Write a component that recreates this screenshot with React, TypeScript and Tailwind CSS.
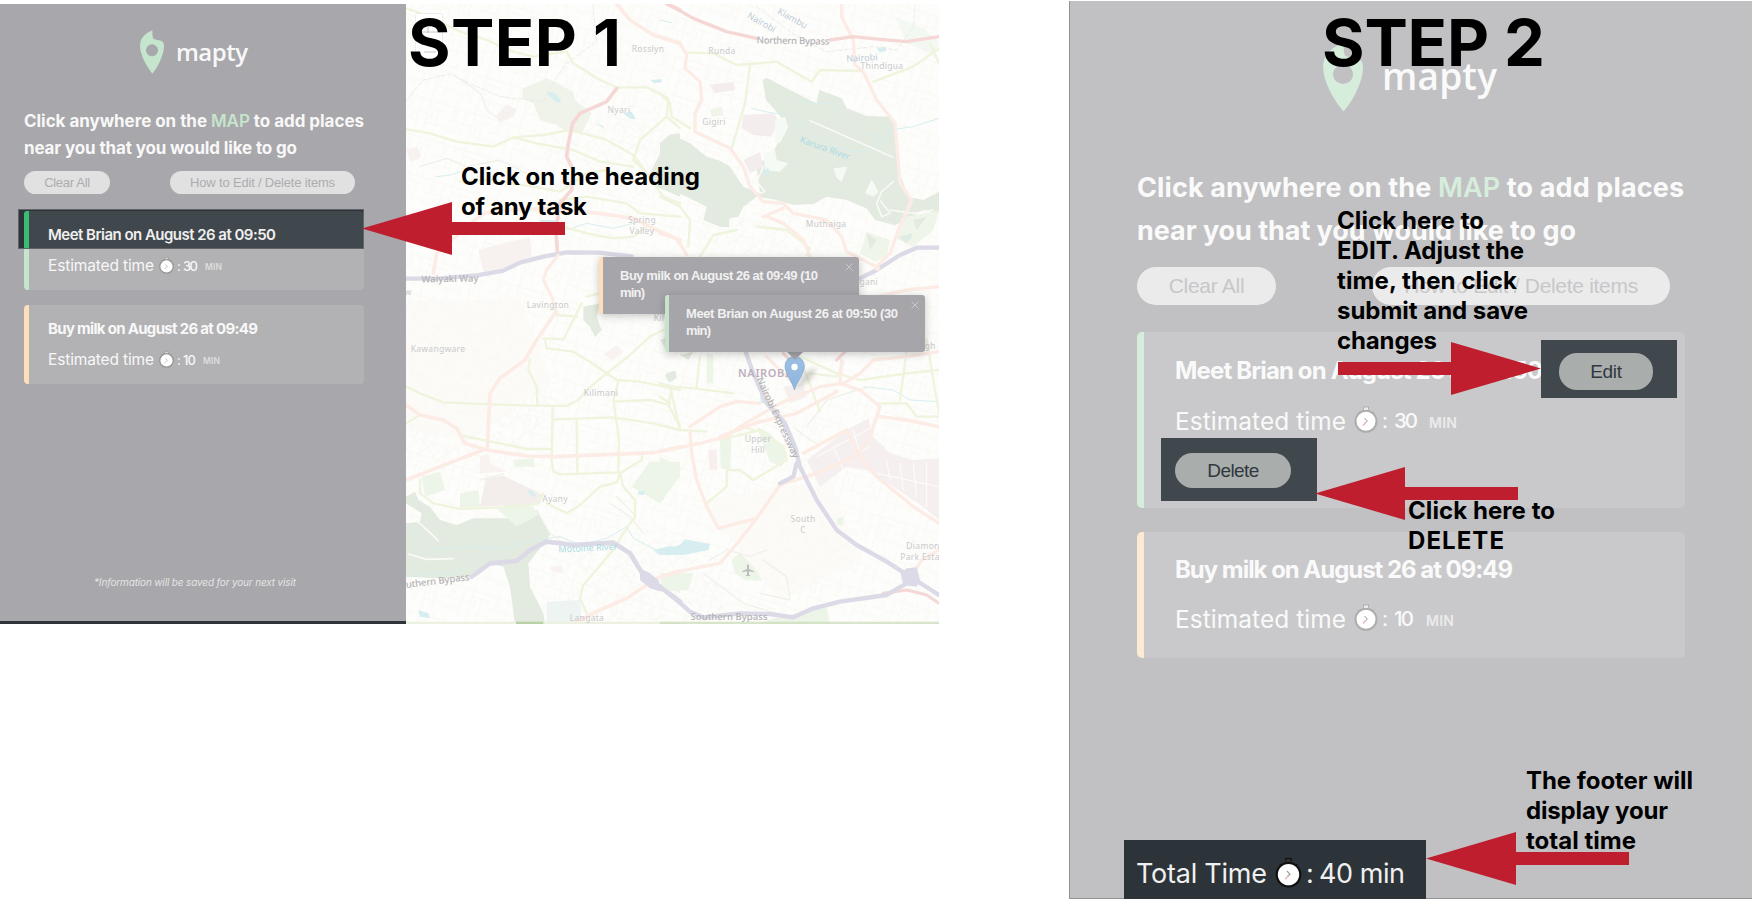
import React, { useLayoutEffect, useRef, useState } from "react";

/* Single line of text whose letter spacing is adjusted to fill a given width. */
function Fit({ w, className = "", children }: { w: number; className?: string; children: React.ReactNode }) {
  const ref = useRef<HTMLSpanElement>(null);
  const [spacing, setSpacing] = useState(0);
  useLayoutEffect(() => {
    const el = ref.current;
    if (!el) return;
    const count = (el.textContent || "").length;
    if (count > 1) setSpacing((w - el.getBoundingClientRect().width) / (count - 1));
  }, [w]);
  return (
    <span ref={ref} className={`inline-block whitespace-nowrap ${className}`} style={{ letterSpacing: spacing }}>
      {children}
    </span>
  );
}

function Pin({ className }: { className: string }) {
  return (
    <svg viewBox="0 0 72 132" preserveAspectRatio="none" className={className}>
      <path
        fillRule="evenodd"
        fill="currentColor"
        d="M37 1 C37 14 38 23 40 26 C48 30 64 30 70 37 C75 52 70 70 62 89 C55 106 46 120 37 131 C28 119 17 103 10 87 C3 70 -2 53 1 38 C5 18 21 9 37 1 Z M36 43 a18 18 0 1 0 0.1 0 Z"
      />
    </svg>
  );
}

function Stopwatch({ className, rim, crown }: { className: string; rim: string; crown: string }) {
  return (
    <svg viewBox="0 0 24 28" className={className}>
      <path d="M9 1.500h6v3H9z" fill={rim} />
      <path d="M10 2.500h4v4h-4z" fill={crown} />
      <path d="M4.200 7l2 2M19.800 7l-2 2" stroke={rim} strokeWidth="1.300" />
      <circle cx="12" cy="16.300" r="10.500" fill="#fff" stroke={rim} strokeWidth="2" />
      <path d="M10.500 13l2.800 3-2 2" fill="none" stroke="#9a9a9a" strokeWidth="1" />
      <path d="M12 17l-3 3.500" stroke="#eeb0b0" strokeWidth="1.200" />
    </svg>
  );
}

function Arrow({ className, flip = false }: { className: string; flip?: boolean }) {
  return (
    <svg viewBox="0 0 203 53" className={className}>
      <path
        fill="#be1e2d"
        d={flip ? "M203 26.500 113 0V20H0V33H113V53Z" : "M0 26.500 90 0V20H203V33H90V53Z"}
      />
    </svg>
  );
}

function SmallEstimate({ value, valueClass }: { value: string; valueClass: string }) {
  return (
    <div className="relative mt-[7px] flex h-6 leading-6 text-[#f7f7f7]">
      <div className="w-[110px] text-[15.500px]">
        <Fit w={106}>Estimated time</Fit>
      </div>
      <Stopwatch className="mt-[2px] h-[18px] w-[17px]" rim="#949494" crown="#dcdcdc" />
      <div className="ml-px w-[7px] pl-px text-[13px]">:</div>
      <div className={`text-[13px] font-medium ${valueClass}`}>
        <Fit w={value === "30" ? 15 : 13}>{value}</Fit>
      </div>
      <div className="pt-px text-[8.500px] font-semibold text-[#dedede]">
        <Fit w={17}>MIN</Fit>
      </div>
    </div>
  );
}

function LargeEstimate({ value, valueClass }: { value: string; valueClass: string }) {
  return (
    <div className="flex h-9 leading-9 text-[#f9f9f9]">
      <div className="w-[178px] text-[24.500px]">
        <Fit w={171}>Estimated time</Fit>
      </div>
      <Stopwatch className="mt-[2px] h-[28px] w-[26px]" rim="#adadad" crown="#f0f0f0" />
      <div className="ml-[2px] w-[13px] pl-px text-[21px]">:</div>
      <div className={`text-[20.500px] font-medium ${valueClass}`}>
        <Fit w={value === "30" ? 24 : 20}>{value}</Fit>
      </div>
      <div className="pt-[2px] text-[14px] font-semibold text-[#ebebeb]">
        <Fit w={28}>MIN</Fit>
      </div>
    </div>
  );
}

function StepOnePanel() {
  return (
    <div className="flex w-[406px] shrink-0 flex-col border-b-[3px] border-[#2d3439] bg-[#a8a7ab] font-['Inter',sans-serif] text-[#f8f8f8]">
      <div className="ml-[140px] mt-[26px] flex h-11">
        <Pin className="h-11 w-6 text-[#c5e5cd]" />
        <div className="ml-3 font-['Open_Sans',sans-serif] text-[24px] font-semibold leading-[44px]">
          <Fit w={72}>mapty</Fit>
        </div>
      </div>
      <div className="ml-6 mr-[42px] mt-[34px] text-[17px] font-bold leading-[27px]">
        <div className="h-[27px]">
          <Fit w={340}>
            Click anywhere on the <span className="font-semibold text-[#c5e5cd]">MAP</span> to add places
          </Fit>
        </div>
        <div className="h-[27px]">
          <Fit w={273}>near you that you would like to go</Fit>
        </div>
      </div>
      <div className="ml-6 mr-[51px] mt-[9px] flex justify-between font-['Liberation_Sans',sans-serif] text-[13px] leading-[23px] text-[#aeacb0]">
        <button className="h-[23px] w-[86px] rounded-full bg-[#e1e1e1]">
          <Fit w={46}>Clear All</Fit>
        </button>
        <button className="h-[23px] w-[185px] rounded-full bg-[#e1e1e1]">
          <Fit w={145}>How to Edit / Delete items</Fit>
        </button>
      </div>
      <div className="ml-6 mr-[42px] mt-[17px] flex flex-col gap-[15px]">
        <div className="relative h-[79px] rounded-[4px] border-l-[5px] border-[#c5e5cd] bg-[#b2b2b4] pl-[19px] pt-3">
          <div className="absolute -left-[11.500px] -top-[2px] right-0 h-10 border border-[#60656a] bg-[#2d3439] pl-[5.500px] pt-px">
            <div className="h-full rounded-t-[3px] border-l-[5px] border-[#3cbc70] bg-[#41484d]" />
          </div>
          <div className="relative h-6 text-[15px] font-semibold leading-6 text-[#efefef]">
            <Fit w={228}>Meet Brian on August 26 at 09:50</Fit>
          </div>
          <SmallEstimate value="30" valueClass="w-[22px]" />
        </div>
        <div className="h-[79px] rounded-[4px] border-l-[5px] border-[#fedfba] bg-[#b2b2b4] pl-[19px] pt-3">
          <div className="h-6 text-[15px] font-bold leading-6">
            <Fit w={210}>Buy milk on August 26 at 09:49</Fit>
          </div>
          <SmallEstimate value="10" valueClass="w-[20px]" />
        </div>
      </div>
      <div className="mb-[31px] ml-[94px] mt-auto h-4 text-[10px] italic leading-4 text-[#e4e4e4]">
        <Fit w={202}>*Information will be saved for your next visit</Fit>
      </div>
    </div>
  );
}

function Popup({ lines, accent, width }: { lines: [string, string]; accent: string; width: number }) {
  return (
    <div
      className={`relative h-[57px] w-[260px] rounded-[3px] border-l-[4px] bg-[#a6a5aa] pl-[17px] pt-[10px] font-['Liberation_Sans',sans-serif] text-[13px] font-bold leading-[17px] text-[#f1f1f1] shadow-[0_2px_8px_rgba(0,0,0,0.22)] ${accent}`}
    >
      <div>
        <Fit w={width}>{lines[0]}</Fit>
      </div>
      <div>
        <Fit w={25}>{lines[1]}</Fit>
      </div>
      <svg viewBox="0 0 8 8" className="absolute right-[6px] top-[6px] size-2">
        <path d="M.5.500l7 7M7.500.500l-7 7" stroke="#cbcbce" strokeWidth="1" />
      </svg>
    </div>
  );
}

const YELLOW = "#eff4dd";
const ORANGE = "#fcece5";
const RED = "#f5d8d6";
const PURPLE = "#dbdae6";
const FOREST = "#e3eadf";
const WATER = "#d6eef0";

function MapArt() {
  return (
    <svg viewBox="406 4 533 620" className="block h-full w-full" fill="none" strokeLinejoin="round" strokeLinecap="round">
      <defs>
        <pattern id="streets" width="46" height="38" patternUnits="userSpaceOnUse" patternTransform="rotate(17)">
          <path d="M0 8H46M0 21H28M28 14H46M7 0V21M19 8V38M28 0V38M38 14V38M0 30H19M28 30H46" stroke="#f8f7f3" strokeWidth="0.900" />
          <path d="M10 11v7M14 24v4M32 18v8M42 3v5M3 33h8" stroke="#f4f3ee" strokeWidth="0.700" />
        </pattern>
        <pattern id="lanes" width="31" height="27" patternUnits="userSpaceOnUse" patternTransform="rotate(-34)">
          <path d="M0 5H31M0 16H18M11 5V27M24 0V16M18 16V27" stroke="#f7f6f2" strokeWidth="0.800" />
        </pattern>
      </defs>
      <rect x="406" y="4" width="533" height="620" fill="#fdfdfb" />
      <rect x="406" y="4" width="533" height="620" fill="url(#streets)" />
      <path d="M406 300H520L560 420 480 470 406 460ZM560 540H690L740 624H570ZM700 500 830 480 860 560 780 600ZM560 90 660 120 650 200 540 190ZM700 210 800 230 830 260H690Z" fill="url(#lanes)" />
      <path d="M406 300H520L550 380 470 440 406 430ZM700 500 830 480 860 560 780 600Z" fill="#fcfaf6" opacity=".5" />

      {/* north west */}
      <g transform="translate(400 0) scale(.33333)">
        <path fill="#f0f3ea" d="M370 265 440 235 520 275 525 300 575 340 545 400 500 395 470 375 420 360 400 310 365 295Z" />
        <path fill="#f7f2f0" d="M290 345 320 312 350 330 340 350 300 368ZM235 750 390 710 395 770 330 800 250 815ZM20 450 50 440 65 470 30 485Z" />
        <path fill={FOREST} d="M840 400 808 405 750 520 770 560 840 590Z" />
        <path fill={WATER} d="M440 275 465 278 485 305 470 308 450 290ZM752 240 785 237 785 247 760 249ZM670 340 695 335 708 358 690 356ZM587 366 612 380 608 384ZM420 660 470 660 468 667 422 667Z" />
        <path stroke="#e6e4e6" strokeWidth="2" strokeDasharray="12 7" d="M20 300 70 240 150 222 210 250 300 290 430 305 455 255 500 190 590 125 578 12" />
        <path stroke="#f2f0ea" strokeWidth="4" d="M160 225 200 250 245 285 260 330 300 360 340 330M60 500 140 475 200 500 300 480 380 520" />
        <path stroke={WATER} strokeWidth="3" d="M110 530 150 525 180 515M500 690 560 670 640 685 700 670" />
        <path stroke={YELLOW} strokeWidth="7" d="M20 25 90 50 180 95 260 120 340 155 400 170 500 155 520 190 600 240 650 262 740 262 805 295 800 350 840 385M800 350 720 420 700 480 740 520 790 590 840 610M20 388 90 400 170 425 280 440 340 412 430 405 510 390 620 420 700 465 740 520M340 412 410 430 520 450 600 485 700 500M180 545 270 540 400 560 480 575 560 520 620 510 720 550M480 600 560 590 680 610 720 640 840 650" />
        <path stroke={ORANGE} strokeWidth="11" d="M650 12 690 60 760 105 840 130M100 820 110 760 200 680 250 640 330 630 450 625 600 640 700 655 770 690 840 720" />
        <path stroke={RED} strokeWidth="11" d="M650 265 620 305 540 340 518 370 505 430 500 470 520 510 515 570 480 610 468 690 472 755M800 12 840 30" />
        <path stroke={YELLOW} strokeWidth="7" d="M490 680 560 700 640 715 700 710 740 680M560 890 600 880" />
        <path stroke={PURPLE} strokeWidth="13" strokeLinecap="butt" d="M18 836H110L230 826 310 812 360 788 430 770 500 757 600 758 700 770" />
        <path stroke={ORANGE} strokeWidth="9" d="M475 765 440 810 430 840 455 890 470 940" />
      </g>

      {/* north east */}
      <g transform="translate(660 0) scale(.33333)">
        <path fill={FOREST} d="M308 240 320 233 390 270 425 288 470 310 478 270 545 295 560 325 620 348 690 350 705 380 712 500 745 590 790 600 837 575V640L790 630 740 660 705 675 645 660 620 625 560 600 500 590 460 612 400 615 340 598 290 590 250 620 235 650 208 655 207 682 180 680 130 660 140 620 80 590 0 555V430L30 403 90 430 140 470 180 482 210 500 250 560 300 580 290 500 340 455 380 375 350 335 318 300Z" />
        <path fill="#f3eeed" d="M250 345 340 340 355 360 335 410 280 405 245 385ZM250 480 300 455 310 500 270 520ZM150 255 220 245 225 270 165 280Z" />
        <path fill="#f6faf4" d="M310 460 345 450 350 480 385 490 360 515 315 510ZM345 360 375 350 385 380 360 430 345 425ZM520 505 562 500 545 545 530 535ZM615 580 635 538 655 575 640 590Z" />
        <path fill="#eff5e8" d="M150 330 185 320 190 345 155 350ZM620 695 690 720 680 770 645 785 600 760ZM740 650 837 632 820 690 760 740 705 715Z" />
        <path fill="#f4f8f2" d="M705 50 790 85 837 130 820 165 740 130Z" />
        <path fill={FOREST} d="M620 700 650 720 630 750ZM760 660 800 650 770 690ZM715 710 760 700 740 730Z" />
        <path fill={WATER} d="M650 145 675 140 680 152 660 157ZM315 510 325 500 328 525 316 525ZM735 705 755 710 750 720Z" />
        <path stroke={WATER} strokeWidth="3" d="M275 325 330 338 390 345 440 395 520 440 590 455 640 450 690 390 760 380 837 355M400 300 470 310 520 310 540 345 580 380 620 400 680 420M0 60 35 68" />
        <path stroke="#fafaf6" strokeWidth="5" d="M450 362 700 472M300 580 315 575 290 545 310 500M700 545 665 575 650 610 665 650 690 640 660 600M690 630 760 640 820 630" strokeDasharray="12 5" />
        <path stroke="#e6e4e6" strokeWidth="2" strokeDasharray="12 7" d="M290 20 390 95 450 130 500 155 640 140 710 150 760 80 765 12" />
        <path stroke={YELLOW} strokeWidth="7" d="M85 158 160 160 230 195 350 185 455 245 480 210 600 213M270 195 255 310 215 445M640 245 760 200 837 145M810 130 837 190M0 280 30 310 35 350 90 385M120 770 160 705 230 690M290 680 380 690 450 745 440 765M0 590 60 620 90 660 85 740" />
        <path stroke={ORANGE} strokeWidth="10" d="M0 110 60 130 80 165 75 205 120 245 125 300 105 340 105 395 210 445 250 500 270 560 310 605 370 610 400 640 500 660 545 710 560 755 650 800 690 760 715 690 755 600 720 550 705 370 650 300 610 215 585 195 580 120 545 50V12M310 650 370 625M320 650 370 670 430 720 450 770M0 700 50 715 80 765M837 860 740 870 650 890" />
        <path stroke={RED} strokeWidth="10" d="M25 12 100 55 200 95 290 115M510 120 580 110 660 118 740 125 837 110" />
        <path stroke={PURPLE} strokeWidth="13" d="M837 743H770L720 765 650 810 590 840" />
        <circle cx="652" cy="805" r="8" fill={ORANGE} />
      </g>

      {/* south west */}
      <g transform="translate(400 300) scale(.33333)">
        <path fill={FOREST} d="M18 590 45 575 55 600 90 620 120 660 170 675 220 655 340 655 410 630 450 705 400 770 385 790 390 860 430 940 435 972H345L330 860 310 800 270 790 220 830 120 835 18 830V670L60 665 65 640 18 610ZM550 20 600 10 590 50 605 90 585 112 570 80 550 60ZM795 225 825 212 830 235 805 245Z" />
        <path fill="#edf4e8" d="M65 530 120 515 135 570 75 590ZM180 580 235 570 240 620 180 625ZM290 625 340 610 400 620 415 645 350 680ZM340 480 400 475 405 500 345 500ZM695 560 750 485 840 485 840 530 780 610ZM780 830 840 820V880L790 860Z" />
        <path fill="#f3edec" d="M258 535 310 527 430 585 420 612 240 620Z" />
        <path fill="#f8f3f1" d="M610 165 650 135 670 155 640 180ZM240 470 265 460 270 490 320 515 240 520ZM450 800 485 795 490 820 455 815Z" />
        <path fill="#edf4f2" d="M440 905 540 900 545 972H440Z" />
        <path fill={WATER} d="M380 570 395 570 412 592 395 588ZM760 750 810 738 840 745V765L780 765ZM712 575 735 573 732 585 718 585ZM55 930 85 940 90 955 60 950Z" />
        <path stroke={WATER} strokeWidth="3" d="M20 680 70 720 110 750 200 740 320 745 400 720 480 710 540 735 620 715 680 680 700 715 740 735 770 750M20 830 100 820 170 820 210 790 260 740" />
        <path stroke="#fafaf6" strokeWidth="5" d="M18 640 60 670 115 722M25 762 80 778 160 776" />
        <path stroke={YELLOW} strokeWidth="7" d="M18 260 60 280 130 307 240 312 400 317 500 318 535 300 560 270 620 220 690 165 750 110 790 90M390 175 385 210 410 260 412 312M435 120 440 145 520 155 570 185 650 240 720 245 840 270M430 115 490 118 520 60 545 10M470 45 530 50M458 320 455 480 460 515 480 523 655 517 657 420 640 300 655 245M530 360 532 515M460 358 640 352 760 370 840 390M640 305 750 300 805 315 815 275M805 315 840 380M190 408 300 430 380 447 455 447M18 370 60 345M60 540 60 580 100 610 180 627 300 622 410 612 430 582M440 610 500 640 540 615 600 560 650 548 660 520 725 480 727 465M660 520 670 560 705 600 705 650 670 700 640 750 550 855 540 895 560 940" />
        <path stroke={ORANGE} strokeWidth="11" d="M468 35 410 120 375 180 300 235 270 280 262 445M18 315 60 345 130 360 170 385 195 430 260 450 380 468 460 470 640 463 760 458 840 440M18 540 120 500 250 450M520 972 600 930 680 895 770 835 840 812" />
        <path stroke="#f2f1ea" strokeWidth="4" d="M410 630 450 700 490 730M630 610 690 650 730 700M650 590 700 640M760 540 790 600M240 540 310 522" />
        <path stroke={PURPLE} strokeWidth="14" d="M215 830 270 790 350 783 390 750 440 725 520 735 640 728 690 760 730 825 780 860 840 905" />
        <path fill={PURPLE} d="M720 805 750 820 775 840 785 875 750 865 720 840Z" />
        <path fill="#edf1e2" d="M18 965H840V972H18Z" />
        <path fill="#b9d1a6" d="M348 965H430V972H348Z" />
      </g>

      {/* south east */}
      <g transform="translate(660 240) scale(.33333)">
        <path fill={FOREST} d="M0 300 35 285 20 330ZM60 345 100 335 85 360ZM18 400 45 392 50 410 30 428Z" />
        <path fill="#edf4e8" d="M0 650 65 685 0 780ZM140 340 160 345 160 430 140 430ZM0 1000 100 1000 85 1050 10 1055ZM215 960 240 938 285 985 308 1022 260 1020 225 1000ZM180 585 215 590 210 690 182 685ZM290 560 330 580 380 640 365 680 330 665ZM320 1140 500 1100 510 1152H320ZM530 835 550 830 550 855 532 855Z" />
        <path fill="#f5f0ef" d="M440 660 560 570 625 535 640 590 690 640 760 660 837 655V840L790 800 700 740 620 690 560 680 480 740ZM370 440 430 430 440 470 390 490Z" />
        <path fill="#f8eeee" d="M145 630 170 630 172 690 148 688Z" />
        <path stroke="#fdfdfb" strokeWidth="3" d="M470 650 640 560M480 700 630 620M520 620 550 690M580 570 600 640M680 660 690 720M720 670 730 750M760 670 770 770M800 670V800M650 700 837 740" />
        <path fill={WATER} d="M0 930 60 915 75 898 150 912 145 930 70 945 0 945ZM300 465 312 470 315 490 302 488Z" />
        <path stroke={WATER} strokeWidth="3" d="M610 440 700 450 750 480 837 485" />
        <path stroke="#f1f0eb" strokeWidth="4" d="M440 560 500 480 590 450 640 440M400 560 450 600 470 610M310 960 380 1010 390 1080 300 1060M130 1000 250 1090 380 1130M150 960 200 930 270 950 320 930" />
        <path stroke={YELLOW} strokeWidth="7" d="M0 430 40 440 100 445 180 455 220 460M120 350 110 440M30 440 60 570 140 575M0 470 30 490M140 790 200 740 200 690 240 690 280 720 380 660 370 620 300 570 220 590 180 600M280 570 250 560M430 380 480 515M450 400 530 410 550 370M740 330 720 480M660 490 740 490 770 530 837 530M800 300 837 520M420 350 530 400 600 420 740 400 837 390" />
        <path stroke={ORANGE} strokeWidth="10" d="M0 635 120 610 200 590 240 560 360 490 480 440 550 430 600 400 640 360 740 350 837 335M90 575 95 640 110 720 140 800 175 865 290 835 360 735 470 700 590 645 630 590 660 500 600 450 540 430 545 360M90 560 180 500 230 485 300 490M180 590 300 545 410 520 530 455M430 640 560 570 600 650 650 710 760 800 837 850M660 530 740 540 837 560M290 835 240 900 180 970 100 985 0 1010M290 420 330 490 370 540M320 350 400 430M760 1000 785 960 837 930" />
        <path stroke={RED} strokeWidth="9" d="M670 1060 740 1050 800 1065 837 1090M530 360 560 330M370 340 385 355" />
        <path stroke={PURPLE} strokeWidth="13" d="M255 330 280 400 320 490 375 550 405 620 420 680 470 780 530 870 590 915 680 965 750 1010 837 1065M0 1040 50 1080 90 1115 130 1132 240 1120 330 1122 400 1132 460 1105 540 1085 680 1065 740 1030M360 730 400 710 410 670" />
        <path fill={PURPLE} d="M722 1000 740 985 770 982 780 1020 770 1040 730 1035Z" />
        <path fill="#bcbdc0" d="M261 976 264 972 267 976V987L281 993V997L267 994V1004L272 1008H256L261 1004V994L247 997V993L261 987Z" />
        <path fill="#c9dab6" d="M0 1145H837V1152H0Z" opacity=".7" />
      </g>

      <g fill="#cacacc" fontFamily="Noto Sans, sans-serif" fontSize="8.500" textAnchor="middle" letterSpacing=".3">
        <text x="648" y="52">Rosslyn</text>
        <text x="619" y="113">Nyari</text>
        <text x="722" y="54">Runda</text>
        <text x="714" y="125">Gigiri</text>
        <text x="882" y="69">Thindigua</text>
        <text x="826" y="227">Muthaiga</text>
        <text x="642" y="223">Spring</text>
        <text x="642" y="234">Valley</text>
        <text x="548" y="308">Lavington</text>
        <text x="438" y="352">Kawangware</text>
        <text x="601" y="396">Kilimani</text>
        <text x="555" y="502">Ayany</text>
        <text x="587" y="621">Langata</text>
        <text x="758" y="442">Upper</text>
        <text x="758" y="453">Hill</text>
        <text x="803" y="522">South</text>
        <text x="803" y="533">C</text>
        <text x="923" y="549">Diamon</text>
        <text x="920" y="560">Park Esta</text>
        <text x="866" y="285">ngani</text>
        <text x="929" y="349">igh</text>
        <text x="408" y="295">w</text>
        <text x="659" y="321">Kil</text>
      </g>
      <g fill="#b2b2b4" fontFamily="Noto Sans, sans-serif" fontSize="9.500" fontWeight="500" textAnchor="middle">
        <text transform="translate(450 282) rotate(-1)" textLength="57">Waiyaki Way</text>
        <text transform="translate(793 44) rotate(1)" textLength="73">Northern Bypass</text>
        <text transform="translate(438 584) rotate(-7)" textLength="64">uthern Bypass</text>
        <text transform="translate(729 620)" textLength="77">Southern Bypass</text>
        <text transform="translate(775 419) rotate(65)" textLength="88">Nairobi Expressway</text>
      </g>
      <g fill="#bccbd6" fontFamily="Noto Sans, sans-serif" fontSize="9" textAnchor="middle">
        <text transform="translate(760 25) rotate(30)">Nairobi</text>
        <text transform="translate(791 21) rotate(29)">Kiambu</text>
        <text transform="translate(862 61) rotate(-3)">Nairobi</text>
        <text transform="translate(824 151) rotate(20)" fill="#a9dbe5">Karura River</text>
        <text transform="translate(588 551) rotate(-3)" fill="#a9dbe5">Motoine River</text>
      </g>
      <text x="738" y="377" fill="#bcaebf" fontFamily="Noto Sans, sans-serif" fontSize="11" fontWeight="600" textLength="51">NAIROBI</text>

      <rect x="415.500" y="13.500" width="27" height="46" rx="2" fill="#fff" stroke="#ececec" />
      <path d="M415 32H443M428 27V33M424 52H436" stroke="#c8c8c8" strokeWidth="1.200" strokeLinecap="butt" />
    </svg>
  );
}

function MapPane() {
  return (
    <div className="relative w-[533px] shrink-0 overflow-hidden">
      <MapArt />
      <div className="absolute left-[193px] top-[253px]">
        <Popup lines={["Buy milk on August 26 at 09:49 (10", "min)"]} accent="border-[#fedfba]" width={198} />
      </div>
      <svg viewBox="0 0 44 46" className="absolute left-[377px] top-[344px] h-[46px] w-11">
        <defs>
          <filter id="soft">
            <feGaussianBlur stdDeviation="2" />
          </filter>
          <linearGradient id="marker" x2="0" y2="1">
            <stop stopColor="#9dc0e2" />
            <stop offset="1" stopColor="#8fb5df" />
          </linearGradient>
        </defs>
        <path d="M12 41 20 25 34 19 28 32Z" fill="#777" opacity=".3" filter="url(#soft)" />
        <path d="M11.500 42C10 35 2 26 2 18A9.700 9.700 0 0 1 21.400 18C21.400 26 13 35 11.500 42Z" fill="url(#marker)" stroke="#7fa9d6" strokeWidth=".7" />
        <circle cx="11.500" cy="19" r="3.200" fill="#fff" />
        <path d="M3 3H21L12 12Z" fill="#a6a5aa" />
      </svg>
      <div className="absolute left-[259px] top-[291px]">
        <Popup lines={["Meet Brian on August 26 at 09:50 (30", "min)"]} accent="border-[#c5e5cd]" width={212} />
      </div>
    </div>
  );
}

function StepTwoPanel() {
  return (
    <div className="mt-px flex h-[898px] w-[683px] shrink-0 flex-col border-b border-l border-[#939395] bg-[#c1c1c3] font-['Inter',sans-serif] text-[#fafafa]">
      <div className="ml-[253px] mt-[41px] flex h-[70px]">
        <Pin className="h-[70px] w-10 text-[#d7eddc]" />
        <div className="ml-[19px] font-['Open_Sans',sans-serif] text-[37px] font-semibold leading-[68px]">
          <Fit w={115}>mapty</Fit>
        </div>
      </div>
      <div className="ml-[67px] mt-[54px] text-[27px] font-bold leading-[43px]">
        <div className="h-[43px]">
          <Fit w={547}>
            Click anywhere on the <span className="font-semibold text-[#d7eddc]">MAP</span> to add places
          </Fit>
        </div>
        <div className="h-[43px]">
          <Fit w={439}>near you that you would like to go</Fit>
        </div>
      </div>
      <div className="ml-[67px] mr-[82px] mt-[15px] flex justify-between font-['Liberation_Sans',sans-serif] text-[21px] leading-[38px] text-[#c9c6ca]">
        <button className="h-[38px] w-[139px] rounded-full bg-[#ebebeb]">
          <Fit w={76}>Clear All</Fit>
        </button>
        <button className="h-[38px] w-[298px] rounded-full bg-[#ebebeb]">
          <Fit w={234}>How to Edit / Delete items</Fit>
        </button>
      </div>
      <div className="ml-[67px] mr-[67px] mt-[27px] flex flex-col gap-6">
        <div className="relative h-[176px] rounded-[5px] border-l-[7px] border-[#d7eddc] bg-[#c9c9cb] pl-[31px] pt-[21px]">
          <div className="h-9 text-[24px] font-bold leading-9">
            <Fit w={368}>Meet Brian on August 26 at 09:50</Fit>
          </div>
          <div className="mt-[14px]">
            <LargeEstimate value="30" valueClass="w-[35px]" />
          </div>
          <div className="absolute left-[397px] top-[8px] h-[58px] w-[136px] bg-[#41484d] pl-[18px] pt-[13px]">
            <button className="block h-[37px] w-[94px] rounded-[18px] bg-[#a9adab] font-['Liberation_Sans',sans-serif] text-[19px] leading-[37px] text-[#30383f]">
              <Fit w={32}>Edit</Fit>
            </button>
          </div>
          <div className="absolute left-[17px] top-[106px] h-[63px] w-[156px] bg-[#41484d] pl-[14px] pt-[15px]">
            <button className="block h-[35px] w-[116px] rounded-[18px] bg-[#a9adab] font-['Liberation_Sans',sans-serif] text-[19px] leading-[35px] text-[#30383f]">
              <Fit w={52}>Delete</Fit>
            </button>
          </div>
        </div>
        <div className="h-[126px] rounded-[5px] border-l-[7px] border-[#fdead2] bg-[#c9c9cb] pl-[31px] pt-[20px]">
          <div className="h-9 text-[24px] font-bold leading-9">
            <Fit w={338}>Buy milk on August 26 at 09:49</Fit>
          </div>
          <div className="mt-[13px]">
            <LargeEstimate value="10" valueClass="w-[32px]" />
          </div>
        </div>
      </div>
      <div className="-mb-px ml-[54px] mt-auto flex h-[59px] w-[302px] bg-[#2d3439] pl-[12px] pt-[15px] text-[27px] leading-[38px] text-[#f0f0f0]">
        <div className="w-[139px]">
          <Fit w={131}>Total Time</Fit>
        </div>
        <Stopwatch className="mt-px h-[32px] w-[27px]" rim="#111" crown="#333" />
        <div className="ml-[4px] w-[13px]">:</div>
        <Fit w={86}>40 min</Fit>
      </div>
    </div>
  );
}

function Note({ className, lines }: { className: string; lines: [string, number][] }) {
  return (
    <div className={`absolute font-['Inter',sans-serif] text-[24px] font-bold leading-[30px] text-black ${className}`}>
      {lines.map(([text, w]) => (
        <div key={text} className="h-[30px]">
          <Fit w={w}>{text}</Fit>
        </div>
      ))}
    </div>
  );
}

export default function App() {
  return (
    <div className="relative h-[899px] w-[1754px] overflow-hidden bg-white">
      <div className="flex h-full items-start">
        <section className="mt-1 flex h-[620px] w-[939px] shrink-0">
          <StepOnePanel />
          <MapPane />
        </section>
        <section className="ml-[130px] flex">
          <StepTwoPanel />
        </section>
      </div>

      <h1 className="absolute left-[408px] top-[7px] font-['Inter',sans-serif] text-[65px] font-bold leading-[72px] text-black">
        <Fit w={213}>STEP 1</Fit>
      </h1>
      <h1 className="absolute left-[1322px] top-[7px] font-['Inter',sans-serif] text-[65px] font-bold leading-[72px] text-black">
        <Fit w={223}>STEP 2</Fit>
      </h1>

      <Arrow className="absolute left-[362px] top-[202px] h-[53px] w-[203px]" />
      <Arrow className="absolute left-[1338px] top-[342px] h-[53px] w-[203px]" flip />
      <Arrow className="absolute left-[1315px] top-[467px] h-[53px] w-[203px]" />
      <Arrow className="absolute left-[1426px] top-[832px] h-[53px] w-[203px]" />

      <Note className="left-[461px] top-[162px]" lines={[["Click on the heading", 239], ["of any task", 126]]} />
      <Note
        className="left-[1337px] top-[206px]"
        lines={[
          ["Click here to", 147],
          ["EDIT. Adjust the", 187],
          ["time, then click", 180],
          ["submit and save", 191],
          ["changes", 100],
        ]}
      />
      <Note className="left-[1408px] top-[496px]" lines={[["Click here to", 147], ["DELETE", 96]]} />
      <Note
        className="left-[1526px] top-[766px]"
        lines={[["The footer will", 167], ["display your", 142], ["total time", 110]]}
      />
    </div>
  );
}
